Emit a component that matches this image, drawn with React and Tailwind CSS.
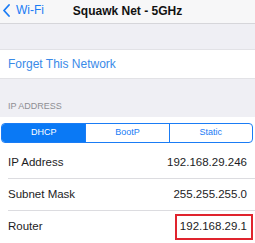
import React from 'react';

function Row({ label, value, boxed, last }) {
    return (
        <div className={`ml-2 pr-2 h-[32px] flex items-center justify-between ${last ? '' : 'border-b border-[#dcdce0]'}`}>
            <span className="text-[11.5px] text-[#1c1c1e]">{label}</span>
            {boxed ? (
                <span className="-mr-[6px] h-[26px] inline-flex items-center border-2 border-[#e0242e] pl-[3px] pr-[4px] text-[11.5px] text-[#1c1c1e]">
                    {value}
                </span>
            ) : (
                <span className="text-[11.5px] text-[#1c1c1e]">{value}</span>
            )}
        </div>
    );
}

export default function App() {
    return (
        <div className="w-[255px] h-[243px] overflow-hidden bg-[#efeff4] font-['Liberation_Sans',Arial,sans-serif]">
            {/* nav bar */}
            <div className="relative h-[24px] bg-[#f7f7f8] border-b border-[#d6d6da] flex items-center justify-center pb-[2px]">
                <div className="absolute left-[3px] top-[3px] flex items-center gap-[6px]">
                    <svg width="7" height="13" viewBox="0 0 7 13">
                        <path d="M6 1 L1 6.5 L6 12" fill="none" stroke="#1a7cf5" strokeWidth="1.8" strokeLinecap="round" strokeLinejoin="round" />
                    </svg>
                    <span className="text-[12px] text-[#1a7cf5] leading-[14px]">Wi-Fi</span>
                </div>
                <span className="text-[12px] font-bold text-[#111]">Squawk Net - 5GHz</span>
            </div>

            <div className="h-[25px]" />

            <div className="h-[30px] bg-white border-y border-[#e2e2e6] flex items-center pl-2">
                <span className="text-[12px] text-[#3a8ae8]">Forget This Network</span>
            </div>

            <div className="h-[38px] flex items-end pl-2 pb-[5px]">
                <span className="text-[9px] leading-[11px] text-[#8e8e93]">IP ADDRESS</span>
            </div>

            <div className="bg-white pt-[6px] border-b border-[#d0d0d4]">
                <div className="mx-[1px] mr-[2px] h-[20px] grid grid-cols-3 border border-[#1a7cf5] rounded-[4px] overflow-hidden text-[9px]">
                    <div className="bg-[#0a79f5] text-white flex items-center justify-center">DHCP</div>
                    <div className="text-[#1a7cf5] flex items-center justify-center border-l border-[#1a7cf5]">BootP</div>
                    <div className="text-[#1a7cf5] flex items-center justify-center border-l border-[#1a7cf5]">Static</div>
                </div>
                <div className="mt-[4px]">
                    <Row label="IP Address" value="192.168.29.246" />
                    <Row label="Subnet Mask" value="255.255.255.0" />
                    <Row label="Router" value="192.168.29.1" boxed last />
                </div>
            </div>
        </div>
    );
}
